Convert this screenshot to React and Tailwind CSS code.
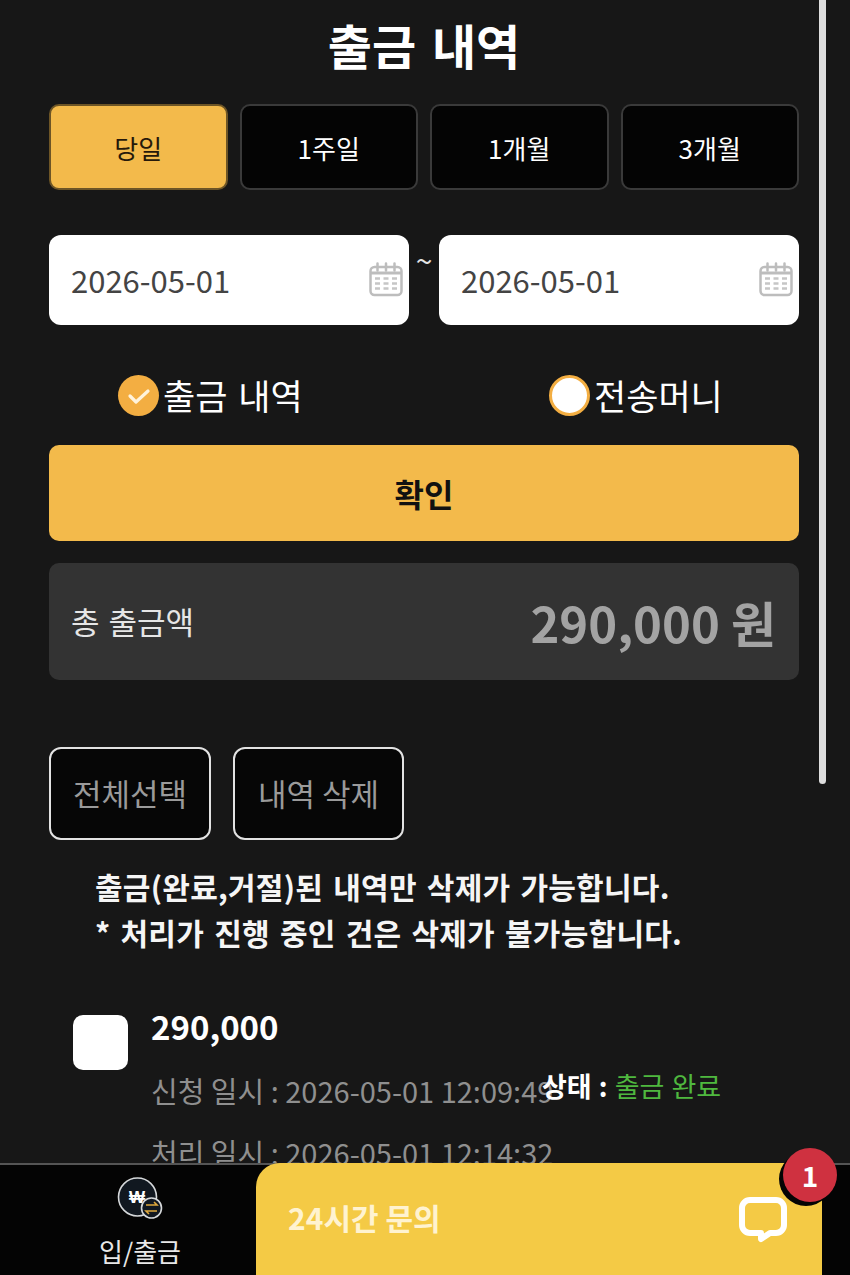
import React from 'react'

const FONT = "font-['Noto_Sans_CJK_KR','Noto_Sans',sans-serif]"

function CalendarIcon() {
  return (
    <svg width="36" height="36" viewBox="0 0 36 36" className="absolute right-[5px] top-[27px]">
      <rect x="2.5" y="5" width="31" height="28" rx="4" fill="none" stroke="#bdbdbd" strokeWidth="2.5" />
      <path d="M2.5 11h31" stroke="#bdbdbd" strokeWidth="3" />
      <path d="M9.5 1.5v7M18 1.5v7M26.5 1.5v7" stroke="#bdbdbd" strokeWidth="2.5" strokeLinecap="round" />
      <path d="M7 16.5h5M15.5 16.5h5M24 16.5h5M7 21.5h5M15.5 21.5h5M24 21.5h5M7 26.5h5M15.5 26.5h5M24 26.5h5" stroke="#c6c6c6" strokeWidth="2.6" />
    </svg>
  )
}

function PeriodButton({ label, active }) {
  return (
    <button
      className={`h-[86px] rounded-[10px] border-2 text-[26px] ${
        active ? 'bg-[#f3ba4b] border-[#6d5526] text-[#26190a]' : 'bg-[#040404] border-[#3a3a3a] text-white'
      }`}
    >
      {label}
    </button>
  )
}

function DateBox({ value }) {
  return (
    <div className="relative flex-1 h-[90px] rounded-[12px] bg-white flex items-center pl-[22px] text-[31px] text-[#444444]">
      {value}
      <CalendarIcon />
    </div>
  )
}

function WonIcon() {
  return (
    <svg width="46" height="42" viewBox="0 0 46 42" className="block">
      <circle cx="20.5" cy="20" r="19" fill="#111820" stroke="#d5d8da" strokeWidth="1.6" />
      <text x="20" y="26" textAnchor="middle" fontSize="17" fontWeight="700" fill="#ffffff" fontFamily="Liberation Sans">₩</text>
      <circle cx="34.5" cy="31" r="10" fill="#111820" stroke="#d5d8da" strokeWidth="1.6" />
      <path d="M29 28h11l-3-3M40 34H29l3 3" fill="none" stroke="#e0a93c" strokeWidth="1.6" />
    </svg>
  )
}

function ChatIcon() {
  return (
    <svg width="48" height="48" viewBox="0 0 48 48" className="block mt-[6px]">
      <path
        d="M11 4h26a8 8 0 0 1 8 8v17a8 8 0 0 1-8 8h-6l-9 6v-6H11a8 8 0 0 1-8-8V12a8 8 0 0 1 8-8z"
        fill="none"
        stroke="#ffffff"
        strokeWidth="6"
        strokeLinejoin="round"
      />
    </svg>
  )
}

export default function App() {
  return (
    <div className={`relative w-[850px] h-[1275px] overflow-hidden bg-[#171717] text-white ${FONT}`}>
      <div className="pl-[49px] pr-[51px]">
        <h1 className="h-[104px] pb-[16px] flex items-center justify-center text-[48px] font-bold [word-spacing:5px]">출금 내역</h1>

        <div className="grid grid-cols-4 gap-3">
          <PeriodButton label="당일" active />
          <PeriodButton label="1주일" />
          <PeriodButton label="1개월" />
          <PeriodButton label="3개월" />
        </div>

        <div className="flex mt-[45px]">
          <DateBox value="2026-05-01" />
          <div className="w-[30px] text-center text-[30px] leading-[48px] text-[#e5e5e5]">~</div>
          <DateBox value="2026-05-01" />
        </div>

        <div className="grid grid-cols-2 h-[120px] pt-[21px] items-center text-[35px] [word-spacing:3px]">
          <div className="flex items-center gap-[4px] pl-[69px]">
            <span className="w-[41px] h-[41px] rounded-full bg-[#f3ae42] flex items-center justify-center">
              <svg width="24" height="18" viewBox="0 0 24 18">
                <path d="M3 9l6 6L21 4" fill="none" stroke="#fff3dc" strokeWidth="3.2" strokeLinecap="round" strokeLinejoin="round" />
              </svg>
            </span>
            출금 내역
          </div>
          <div className="flex items-center gap-[4px] pl-[125px]">
            <span className="w-[41px] h-[41px] rounded-full bg-white border-[3px] border-[#f3ae42]" />
            전송머니
          </div>
        </div>

        <button className="w-full h-[96px] rounded-[10px] bg-[#f3ba4b] text-[#111111] text-[32px] font-bold">확인</button>

        <div className="mt-[22px] h-[117px] rounded-[10px] bg-[#333333] flex items-center justify-between pl-[22px] pr-[23px]">
          <span className="text-[31px] text-[#e6e6e6] [word-spacing:2px]">총 출금액</span>
          <span className="text-[49px] font-bold text-[#a3a3a3]">290,000 원</span>
        </div>

        <div className="flex gap-[22px] mt-[67px]">
          <button className="w-[162px] h-[93px] rounded-[12px] border-2 border-[#e2e2e2] bg-[#060606] text-[31px] text-[#9a9a9a]">전체선택</button>
          <button className="w-[171px] h-[93px] rounded-[12px] border-2 border-[#e2e2e2] bg-[#060606] text-[31px] text-[#9a9a9a]">내역 삭제</button>
        </div>

        <div className="mt-[23px] pl-[46px] text-[30px] font-bold leading-[46px] text-[#f5f5f5] tracking-[0.25px] [word-spacing:3px] whitespace-nowrap">
          <p>출금(완료,거절)된 내역만 삭제가 가능합니다.</p>
          <p>* 처리가 진행 중인 건은 삭제가 불가능합니다.</p>
        </div>

        <div className="relative flex mt-[59px] pl-[24px] gap-[23px]">
          <div className="w-[55px] h-[55px] rounded-[10px] bg-white mt-[1px]" />
          <div>
            <div className="text-[33px] font-bold leading-[28px] -mt-[2px]">290,000</div>
            <div className="mt-[19px] text-[29px] leading-[62px] text-[#8f8f8f] whitespace-nowrap">
              <p>신청 일시 : 2026-05-01 12:09:49</p>
              <p>처리 일시 : 2026-05-01 12:14:32</p>
            </div>
          </div>
          <div className="absolute left-[493px] top-[56px] text-[27px] leading-[32px] whitespace-nowrap [word-spacing:1px]">
            <span className="font-bold">상태 : </span>
            <span className="text-[#4fb83f]">출금 완료</span>
          </div>
        </div>
      </div>

      {/* overlay scrollbar */}
      <div className="absolute right-[24px] top-0 w-[7px] h-[784px] rounded-b-full bg-[#dedede]" />

      {/* bottom nav */}
      <div className="absolute left-0 right-0 bottom-0 h-[112px] bg-[#040404] border-t-2 border-[#555555]">
        <div className="w-[280px] flex flex-col items-center pt-[12px]">
          <WonIcon />
          <span className="mt-[14px] text-[26px] leading-[36px] text-[#e8e8e8]">입/출금</span>
        </div>
      </div>

      <div className="absolute left-[256px] bottom-0 w-[566px] h-[112px] rounded-t-[24px] bg-[#f4ca45] flex items-center justify-between pl-[32px] pr-[35px] pb-[4px]">
        <span className="text-[30px] font-bold text-[#fff3d0]">24시간 문의</span>
        <ChatIcon />
      </div>

      <div className="absolute left-[783px] top-[1148px] w-[54px] h-[54px] rounded-full bg-[#cf3140] shadow-[-4px_4px_0_#040404] flex items-center justify-center text-[28px] font-bold">
        1
      </div>
    </div>
  )
}
